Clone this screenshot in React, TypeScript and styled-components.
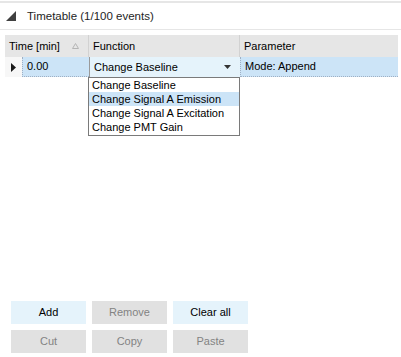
import React from 'react';
import styled, { createGlobalStyle } from 'styled-components';

const GlobalStyle = createGlobalStyle`
  html, body {
    margin: 0;
    padding: 0;
    background: #ffffff;
  }
  body {
    font-family: "Liberation Sans", Arial, sans-serif;
    font-size: 11px;
    color: #000000;
  }
`;

const Page = styled.div`
  width: 401px;
  height: 357px;
  display: flex;
  flex-direction: column;
  box-sizing: border-box;
  padding-top: 1px;
`;

const Rule = styled.div<{ thin?: boolean }>`
  height: ${(p) => (p.thin ? 1 : 2)}px;
  background: #e6e6e6;
`;

const SectionHeader = styled.div`
  height: 26px;
  display: flex;
  align-items: center;
  gap: 11px;
  padding-left: 6px;
  padding-bottom: 1px;
  box-sizing: border-box;
  font-size: 11.5px;
  color: #1e1e1e;
`;

const GridWrap = styled.div`
  margin: 5px 3px 0 5px;
  position: relative;
`;

const Row = styled.div`
  display: flex;
`;

const HeadCell = styled.div<{ width: number }>`
  width: ${(p) => p.width}px;
  height: 22px;
  box-sizing: border-box;
  background: #e6e6e6;
  border-right: 1px solid #d2d2d2;
  display: flex;
  align-items: center;
  justify-content: space-between;
  padding: 0 9px 0 4px;

  &:last-child {
    border-right: none;
  }
`;

const RowHead = styled.div`
  width: 17px;
  height: 20px;
  background: #f7f7f7;
  display: flex;
  align-items: center;
  justify-content: center;
`;

const Cell = styled.div<{ width: number; tone: 'selected' | 'editing' }>`
  width: ${(p) => p.width}px;
  height: 20px;
  box-sizing: border-box;
  display: flex;
  align-items: center;
  justify-content: space-between;
  padding: 0 9px 1px 4px;
  background: ${(p) => (p.tone === 'editing' ? '#e5f3fb' : '#cce4f7')};
  border-bottom: ${(p) => (p.tone === 'editing' ? 'none' : '1px dotted #9fb0c4')};
  border-left: 1px ${(p) => (p.tone === 'editing' ? 'solid #9a9a9a' : 'dotted #9fb0c4')};
`;

const DropList = styled.div`
  position: absolute;
  left: 83px;
  top: 42px;
  width: 152px;
  box-sizing: border-box;
  border: 1px solid #7a7a7a;
  background: #ffffff;
  padding-bottom: 1px;
`;

const DropItem = styled.div<{ active?: boolean }>`
  height: 14px;
  line-height: 14px;
  padding-left: 3px;
  background: ${(p) => (p.active ? '#cce4f7' : 'transparent')};
`;

const Buttons = styled.div`
  margin: auto 0 4px 11px;
  display: grid;
  grid-template-columns: repeat(3, 75px);
  grid-auto-rows: 23px;
  gap: 6px;
`;

const Button = styled.div<{ enabled?: boolean }>`
  display: flex;
  align-items: center;
  justify-content: center;
  padding-bottom: 1px;
  background: ${(p) => (p.enabled ? '#e5f3fb' : '#e1e1e1')};
  color: ${(p) => (p.enabled ? '#000000' : '#838383')};
`;

const Collapse = () => (
  <svg width="10" height="10" viewBox="0 0 10 10">
    <polygon points="10,0 10,10 0,10" fill="#404040" />
  </svg>
);

const SortMark = () => (
  <svg width="7" height="6" viewBox="0 0 7 6">
    <polygon points="3.5,0.5 6.5,5.5 0.5,5.5" fill="none" stroke="#b4b4b4" strokeWidth="1" />
  </svg>
);

const RowArrow = () => (
  <svg width="5" height="9" viewBox="0 0 5 9">
    <polygon points="0,0 5,4.5 0,9" fill="#1a1a1a" />
  </svg>
);

const DownArrow = () => (
  <svg width="7" height="4" viewBox="0 0 7 4">
    <polygon points="0,0 7,0 3.5,4" fill="#333333" />
  </svg>
);

const functions = [
  'Change Baseline',
  'Change Signal A Emission',
  'Change Signal A Excitation',
  'Change PMT Gain',
];

export default function App() {
  return (
    <>
      <GlobalStyle />
      <Page>
        <Rule />
        <SectionHeader>
          <Collapse />
          <span>Timetable (1/100 events)</span>
        </SectionHeader>
        <Rule thin />
        <GridWrap>
          <Row>
            <HeadCell width={84}>
              <span>Time [min]</span>
              <SortMark />
            </HeadCell>
            <HeadCell width={151}>Function</HeadCell>
            <HeadCell width={158}>Parameter</HeadCell>
          </Row>
          <Row>
            <RowHead>
              <RowArrow />
            </RowHead>
            <Cell width={67} tone="selected">0.00</Cell>
            <Cell width={151} tone="editing">
              <span>Change Baseline</span>
              <DownArrow />
            </Cell>
            <Cell width={158} tone="selected">Mode: Append</Cell>
          </Row>
          <DropList>
            {functions.map((f) => (
              <DropItem key={f} active={f === 'Change Signal A Emission'}>
                {f}
              </DropItem>
            ))}
          </DropList>
        </GridWrap>
        <Buttons>
          <Button enabled>Add</Button>
          <Button>Remove</Button>
          <Button enabled>Clear all</Button>
          <Button>Cut</Button>
          <Button>Copy</Button>
          <Button>Paste</Button>
        </Buttons>
      </Page>
    </>
  );
}
